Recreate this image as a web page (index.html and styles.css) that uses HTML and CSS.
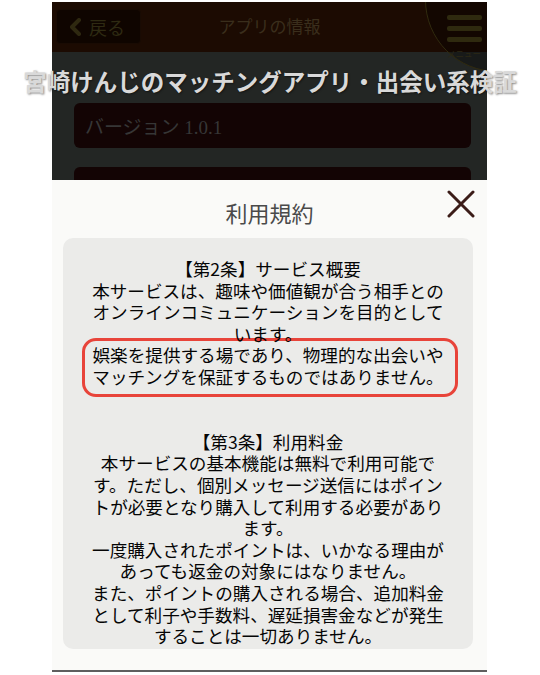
FILE: index.html
```html
<!DOCTYPE html>
<html lang="ja">
<head>
<meta charset="utf-8">
<title>利用規約</title>
<link rel="stylesheet" href="styles.css">
</head>
<body>
<div class="phone">
  <header class="app-header">
    <div class="back">
      <svg class="chev" width="14" height="18" viewBox="0 0 14 18"><polyline points="11,2 4,9 11,16" fill="none" stroke="#2e2810" stroke-width="4" stroke-linecap="round" stroke-linejoin="round"/></svg>
      <span>戻る</span>
    </div>
    <div class="app-title">アプリの情報</div>
    <div class="menu">
      <span class="menu-ring"></span>
      <span class="bar"></span>
      <span class="bar"></span>
      <span class="bar"></span>
      <span class="menu-label">メニュー</span>
    </div>
  </header>
  <main class="app-body">
    <div class="card version">バージョン 1.0.1</div>
    <div class="card"></div>
  </main>
  <section class="modal">
    <div class="modal-head">
      <h1>利用規約</h1>
      <span class="close">
        <svg width="28" height="28" viewBox="0 0 28 28"><path d="M2 2 L26 26 M26 2 L2 26" stroke="#3b1c18" stroke-width="3" stroke-linecap="round"/></svg>
      </span>
    </div>
    <div class="terms">
      <div class="line">【第2条】サービス概要</div>
      <div class="line">本サービスは、趣味や価値観が合う相手との</div>
      <div class="line">オンラインコミュニケーションを目的として</div>
      <div class="line">います。</div>
      <div class="mark">
        <div class="line">娯楽を提供する場であり、物理的な出会いや</div>
        <div class="line">マッチングを保証するものではありません。</div>
      </div>
      <div class="line blank"></div>
      <div class="line blank"></div>
      <div class="line">【第3条】利用料金</div>
      <div class="line">本サービスの基本機能は無料で利用可能で</div>
      <div class="line">す。ただし、個別メッセージ送信にはポイン</div>
      <div class="line">トが必要となり購入して利用する必要があり</div>
      <div class="line">ます。</div>
      <div class="line">一度購入されたポイントは、いかなる理由が</div>
      <div class="line">あっても返金の対象にはなりません。</div>
      <div class="line">また、ポイントの購入される場合、追加料金</div>
      <div class="line">として利子や手数料、遅延損害金などが発生</div>
      <div class="line">することは一切ありません。</div>
      <div class="line">なお、サービスのご利用にかかる通信費等</div>
    </div>
  </section>
</div>
<div class="watermark">宮崎けんじのマッチングアプリ・出会い系検証</div>
</body>
</html>
```
FILE: styles.css
```css
* { box-sizing: border-box; }
html, body { margin: 0; padding: 0; }
body {
  background: #ffffff;
  font-family: "Noto Sans CJK JP", "Noto Sans", sans-serif;
  width: 540px;
  height: 675px;
  overflow: hidden;
  position: relative;
}
.phone {
  position: relative;
  margin: 2px 0 0 52px;
  width: 435px;
  height: 670px;
  overflow: hidden;
  border-bottom: 2px solid #5e5e5e;
  display: flex;
  flex-direction: column;
}
.app-header {
  height: 50px;
  flex: none;
  display: grid;
  grid-template-columns: 90px 1fr 90px;
  align-items: start;
  background: #1c0b02;
}
.back {
  margin: 7px 0 0 4px;
  width: 85px;
  height: 35px;
  background: #0f0500;
  border: 1px solid #190b03;
  border-radius: 4px;
  display: flex;
  align-items: center;
  padding-left: 11px;
  gap: 7px;
  color: #2e2a12;
  font-family: "Liberation Serif", "Noto Sans CJK JP", serif;
  font-size: 18px;
}
.app-title {
  text-align: center;
  padding-top: 14px;
  font-family: "Liberation Serif", "Noto Sans CJK JP", serif;
  font-size: 17px;
  line-height: 24px;
  color: #3a2e1c;
}
.menu {
  position: relative;
  justify-self: end;
  margin-right: 3px;
  width: 40px;
  padding-top: 13px;
  display: flex;
  flex-direction: column;
  align-items: center;
  gap: 6px;
}
.menu-ring {
  position: absolute;
  left: -19px;
  top: -74px;
  width: 144px;
  height: 144px;
  border-radius: 50%;
  border: 1.5px solid #302a0e;
  background: rgba(0, 0, 0, 0.3);
}
.bar {
  position: relative;
  width: 35px;
  height: 5px;
  border-radius: 2px;
  background: #2f2a0f;
}
.menu-label {
  position: relative;
  font-size: 8.5px;
  line-height: 10px;
  color: #2c2814;
  white-space: nowrap;
}
.app-body {
  height: 128px;
  flex: none;
  overflow: hidden;
  padding: 51px 16px 0 22px;
  background: #232624;
  display: flex;
  flex-direction: column;
  gap: 19px;
}
.card {
  flex: none;
  height: 45px;
  border-radius: 6px;
  background: #130404;
}
.version {
  display: flex;
  align-items: center;
  padding-left: 11px;
  font-family: "Liberation Serif", "Noto Sans CJK JP", serif;
  font-size: 19px;
  color: #363636;
}
.modal {
  position: relative;
  flex: 1;
  background: #fafaf8;
}
.modal-head {
  height: 58px;
  position: relative;
}
.modal-head h1 {
  margin: 0;
  padding-top: 17px;
  text-align: center;
  font-size: 22px;
  line-height: 30px;
  font-weight: 400;
  color: #4a4a4a;
}
.close {
  position: absolute;
  top: 10px;
  right: 12px;
  width: 28px;
  height: 28px;
  display: block;
}
.close svg { display: block; }
.terms {
  height: 411px;
  margin: 0 14px 0 11px;
  background: #ebebe9;
  border-radius: 10px;
  overflow: hidden;
  padding: 20px 10px 0;
  font-size: 17.6px;
  line-height: 21.6px;
  color: #050505;
  text-align: center;
  white-space: nowrap;
}
.line { height: 21.6px; }
.mark {
  margin: -6.6px 5px -9.2px 9px;
  border: 3px solid #e8443a;
  border-radius: 14px;
  padding: 3.6px 4px 6.2px 0;
}
.watermark {
  position: absolute;
  top: 66px;
  left: 0;
  width: 540px;
  text-align: center;
  font-size: 23.5px;
  line-height: 30px;
  font-weight: 700;
  color: #d9d9d9;
  text-shadow: 1px 1px 2px rgba(0, 0, 0, 0.45);
  white-space: nowrap;
}
```
